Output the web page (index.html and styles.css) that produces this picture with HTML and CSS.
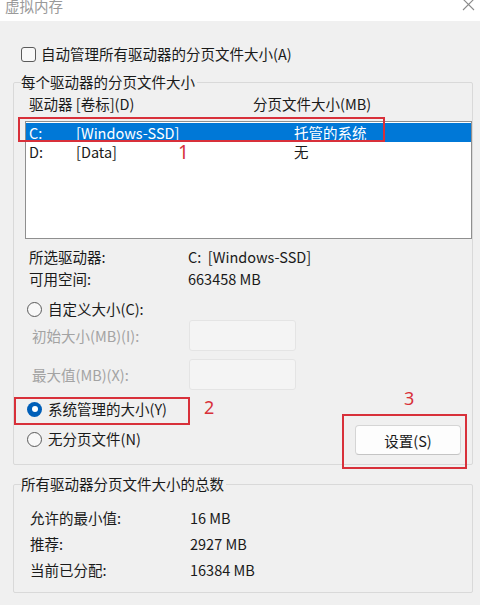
FILE: index.html
```html
<!DOCTYPE html>
<html lang="zh-CN">
<head>
<meta charset="utf-8">
<title>虚拟内存</title>
<link rel="stylesheet" href="styles.css">
</head>
<body>
<div class="window">
  <div class="titlebar">
    <span class="title">虚拟内存</span>
    <svg class="close" width="13" height="13" viewBox="0 0 13 13"><path d="M1 1 L12 12 M12 1 L1 12" stroke="#8a8a8a" stroke-width="1.1" fill="none"/></svg>
  </div>
  <div class="content">
    <div class="auto-row">
      <span class="checkbox"></span>
      <span>自动管理所有驱动器的分页文件大小(A)</span>
    </div>

    <fieldset class="group group-drives">
      <legend>每个驱动器的分页文件大小</legend>
      <div class="group-body drives-body">
        <div class="list-header">
          <span>驱动器 [卷标](D)</span>
          <span>分页文件大小(MB)</span>
        </div>
        <div class="listbox">
          <div class="list-row selected">
            <span>C:</span><span>[Windows-SSD]</span><span>托管的系统</span>
          </div>
          <div class="list-row">
            <span>D:</span><span>[Data]</span><span>无</span>
          </div>
        </div>
        <div class="info">
          <span>所选驱动器:</span><span>C:&nbsp; [Windows-SSD]</span>
          <span>可用空间:</span><span>663458 MB</span>
        </div>
        <div class="radio-row custom">
          <span class="radio"></span>
          <span>自定义大小(C):</span>
        </div>
        <div class="size-row">
          <span class="disabled">初始大小(MB)(I):</span>
          <span class="input"></span>
        </div>
        <div class="size-row">
          <span class="disabled">最大值(MB)(X):</span>
          <span class="input"></span>
        </div>
        <div class="bottom-area">
          <div class="radio-col">
            <div class="radio-row">
              <span class="radio checked"></span>
              <span>系统管理的大小(Y)</span>
            </div>
            <div class="radio-row">
              <span class="radio"></span>
              <span>无分页文件(N)</span>
            </div>
          </div>
          <button class="btn">设置(S)</button>
        </div>
      </div>
    </fieldset>

    <fieldset class="group group-total">
      <legend>所有驱动器分页文件大小的总数</legend>
      <div class="group-body totals">
        <span>允许的最小值:</span><span>16 MB</span>
        <span>推荐:</span><span>2927 MB</span>
        <span>当前已分配:</span><span>16384 MB</span>
      </div>
    </fieldset>
  </div>

  <div class="mark mark-1"></div>
  <div class="mark mark-2"></div>
  <div class="mark mark-3"></div>
  <span class="num num-1">1</span>
  <span class="num num-2">2</span>
  <span class="num num-3">3</span>
</div>
</body>
</html>
```

FILE: styles.css
```css
* { box-sizing: border-box; }
html, body { margin: 0; padding: 0; }
body {
  font-family: "Noto Sans CJK SC", "Noto Sans", sans-serif;
  font-size: 14.5px;
  color: #1a1a1a;
  background: #f0f0f0;
}
.window {
  position: relative;
  width: 480px;
  height: 605px;
  overflow: hidden;
  background: #f0f0f0;
}
.titlebar {
  height: 21px;
  background: #ffffff;
  display: flex;
  justify-content: space-between;
  align-items: flex-start;
  overflow: hidden;
}
.title {
  margin: -3px 0 0 5px;
  line-height: 18px;
  color: #9a9a9a;
}
.close {
  margin: -2px 5px 0 0;
}
.content {
  padding: 0 7px 0 13px;
}
.auto-row {
  margin-top: 23px;
  height: 20px;
  display: flex;
  align-items: center;
  gap: 5px;
  padding-left: 8px;
  line-height: 20px;
}
.checkbox {
  width: 15px;
  height: 15px;
  border: 1px solid #5a5a5a;
  border-radius: 3px;
  background: #f8f8f8;
  flex: none;
}
.group {
  margin: 0;
  padding: 0;
  border: 1px solid #d9d9d9;
  border-radius: 2px;
  min-width: 0;
}
.group legend {
  margin-left: 7px;
  padding: 0 2px 0 0;
  line-height: 18px;
}
.group-drives {
  margin-top: 9px;
}
.drives-body {
  padding: 0 0 9px 11px;
}
.list-header {
  margin-top: 3px;
  height: 20px;
  line-height: 20px;
  display: grid;
  grid-template-columns: 224px auto;
  padding-left: 4px;
}
.listbox {
  margin-top: 7px;
  height: 118px;
  border: 1px solid #8f8f8f;
  background: #ffffff;
  padding-top: 1px;
}
.list-row {
  height: 19px;
  line-height: 19px;
  display: grid;
  grid-template-columns: 47px 218px auto;
  padding-left: 3px;
}
.list-row.selected {
  background: #0078d7;
  color: #ffffff;
}
.info {
  margin-top: 7px;
  display: grid;
  grid-template-columns: 159px auto;
  grid-auto-rows: 22px;
  line-height: 22px;
  padding-left: 4px;
}
.radio-row {
  display: flex;
  align-items: center;
  gap: 6px;
  padding-left: 2px;
  height: 24px;
  line-height: 24px;
}
.radio-row.custom {
  margin-top: 8px;
  height: 22px;
}
.radio {
  width: 15px;
  height: 15px;
  border: 1px solid #5a5a5a;
  border-radius: 50%;
  background: #f8f8f8;
  flex: none;
  display: flex;
  align-items: center;
  justify-content: center;
}
.radio.checked {
  border: none;
  background: #005fb8;
}
.radio.checked::after {
  content: "";
  width: 6px;
  height: 6px;
  border-radius: 50%;
  background: #ffffff;
}
.size-row {
  display: grid;
  grid-template-columns: 157px 107px;
  align-items: center;
  padding-left: 7px;
}
.size-row + .size-row {
  margin-top: 8px;
}
.disabled {
  color: #a3a3a3;
}
.input {
  height: 31px;
  border: 1px solid #e4e4e4;
  border-radius: 3px;
  background: #f4f4f4;
}
.bottom-area {
  margin-top: 7px;
  display: flex;
  justify-content: space-between;
  align-items: flex-end;
}
.radio-col {
  display: flex;
  flex-direction: column;
  gap: 6px;
  padding-bottom: 4px;
}
.btn {
  width: 106px;
  height: 30px;
  margin-right: 11px;
  font: inherit;
  color: #1a1a1a;
  background: #fdfdfd;
  border: 1px solid #d5d5d5;
  border-bottom-color: #c4c4c4;
  border-radius: 4px;
  padding: 0;
}
.group-total {
  margin-top: 10px;
}
.totals {
  padding: 12px 0 9px 16px;
  display: grid;
  grid-template-columns: 160px auto;
  grid-auto-rows: 26px;
  line-height: 26px;
}
.mark {
  position: absolute;
  border: 2px solid #d8303a;
}
.mark-1 { left: 18px; top: 117px; width: 367px; height: 25px; }
.mark-2 { left: 14px; top: 397px; width: 176px; height: 28px; }
.mark-3 { left: 342px; top: 414px; width: 125px; height: 55px; }
.num {
  position: absolute;
  font-family: "Noto Sans", sans-serif;
  font-size: 18px;
  line-height: 18px;
  color: #d8303a;
}
.num-1 { left: 178px; top: 143px; font-size: 19px; line-height: 19px; }
.num-2 { left: 204px; top: 398px; }
.num-3 { left: 404px; top: 389px; }
```
